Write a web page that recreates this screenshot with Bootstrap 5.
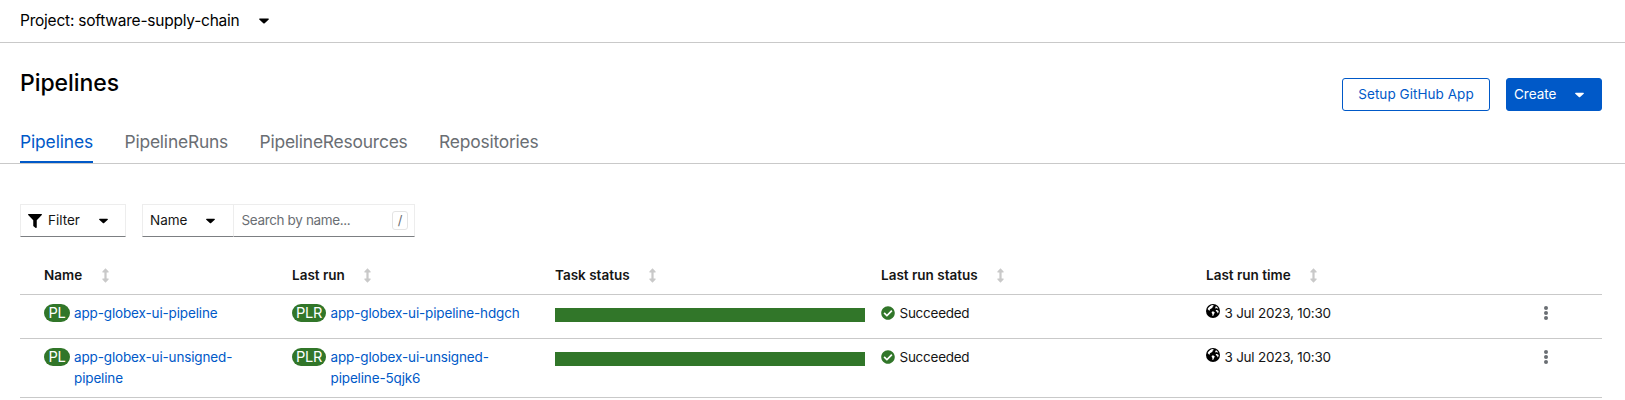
<!DOCTYPE html>
<html lang="en">
<head>
<meta charset="utf-8">
<title>Pipelines</title>
<link href="https://cdn.jsdelivr.net/npm/bootstrap@5.3.0/dist/css/bootstrap.min.css" rel="stylesheet">
<style>
:root{--blue:#0059c8;--line:#c9c9c9;--green:#317629}
body{font-family:Inter,"Liberation Sans",sans-serif;font-size:13.5px;line-height:21px;color:#151515;background:#fff;overflow:hidden}
svg{display:block;flex:none}
a{color:var(--blue);text-decoration:none}
.project-bar{height:43px;padding:0 20px 1px;border-bottom:1px solid var(--line);color:#000}
.project-bar button{font-size:15.5px;letter-spacing:-.23px;gap:19px}
.page-head{height:80px;padding:22px 23px 0 20px}
.page-head h1{font-size:23px;font-weight:500;line-height:36px;color:#000;letter-spacing:-.05px}
.actions{gap:16px;padding-top:13px}
.actions .btn{height:33px;border-radius:3px;font-size:13.5px;padding:0 7px;line-height:31px;--bs-btn-color:var(--blue);--bs-btn-border-color:var(--blue)}
.actions .btn-primary{--bs-btn-bg:var(--blue);--bs-btn-color:#fff;width:96px;gap:19px;padding-left:7px}
.actions .btn-outline-primary{width:148px;letter-spacing:.05px}
.tabs{height:41px;padding-left:20px;gap:31.5px;border-bottom:1px solid var(--line)}
.tabs .nav-link{padding:6px 0 0;font-size:17.4px;line-height:26px;letter-spacing:-.2px;color:#6a6e73;height:40px}
.tabs .nav-link.active{color:var(--blue);border-bottom:2px solid var(--blue);letter-spacing:-.12px}
.tools{padding:40px 20px 0;gap:16px}
.control{height:33px;border:1px solid #ededed;border-bottom-color:#7c7f82;background:#fff;padding:0 7px;color:#151515}
.control .caret-icon{margin-left:19px}
.filter-btn{width:106px}
.filter-btn .funnel{margin-right:6px}
.name-btn{width:91px;border-right:0}
.search-box{width:182px;color:#6a6e73;letter-spacing:-.36px;padding:0 6px 0 7.5px}
.key{width:16px;height:19px;border:1px solid #e4e4e4;border-radius:3px;line-height:17px;letter-spacing:0;font-size:13px}
.pipes{margin:17px 0 0 20px;width:1582px;table-layout:fixed;border-collapse:separate;border-spacing:0}
.pipes th{height:41px;font-weight:600;padding:2px 0 0;vertical-align:middle}
.pipes th,.pipes td{border-bottom:1px solid var(--line)}
.pipes td{padding:8px 0 14px;vertical-align:top;letter-spacing:-.14px}
.pipes tr:last-child td{padding-bottom:8px}
.pipes th:first-child,.pipes td:first-child{padding-left:24px}
.sort{gap:19.5px}
.pill{background:var(--green);color:#fff;border-radius:10px;height:18px;line-height:18px;font-size:14.6px;letter-spacing:-.3px;text-align:center;margin-top:1px;flex:none}
.pl{width:26px;margin-right:4px}
.plr{width:34px;margin-right:4.5px}
.bar{height:14px;width:310px;margin-top:5px;background:var(--green)}
.ok{letter-spacing:-.26px;gap:4.5px}
.ok svg{margin-bottom:1px}
.date{letter-spacing:-.24px;gap:4.5px}
.date svg{margin-bottom:5px}
.kebab{margin-top:3px}
</style>
</head>
<body>
<svg class="d-none">
<symbol id="caret" viewBox="0 0 10 6"><path d="M.8.4h8.4c.7 0 .9.7.5 1.1L5.7 5.3c-.4.4-1 .4-1.4 0L.3 1.5C-.1 1.1.1.4.8.4z"/></symbol>
<symbol id="sort" viewBox="0 0 7 15"><path d="M3.5.3 6.6 3.6Q7 4.4 6.2 4.6H4.6v5.8h1.6Q7 10.6 6.6 11.4L3.5 14.7.4 11.4Q0 10.6.8 10.4h1.6V4.6H.8Q0 4.4.4 3.6z"/></symbol>
<symbol id="filter" viewBox="0 0 512 512"><path d="M487.976 0H24.028C2.71 0-8.047 25.866 7.058 40.971L192 225.941V432c0 7.831 3.821 15.17 10.237 19.662l80 55.98C298.02 518.69 320 507.493 320 487.98V225.941l184.947-184.97C520.021 25.896 509.338 0 487.976 0z"/></symbol>
<symbol id="check" viewBox="0 0 512 512"><path d="M504 256c0 136.967-111.033 248-248 248S8 392.967 8 256 119.033 8 256 8s248 111.033 248 248zM227.314 387.314l184-184c6.248-6.248 6.248-16.379 0-22.627l-22.627-22.627c-6.248-6.249-16.379-6.249-22.628 0L216 308.118l-70.059-70.059c-6.248-6.248-16.379-6.248-22.628 0l-22.627 22.627c-6.248 6.248-6.248 16.379 0 22.627l104 104c6.249 6.249 16.379 6.249 22.628.001z"/></symbol>
<symbol id="globe" viewBox="0 0 14 14"><circle cx="7" cy="7" r="7"/><path fill="#fff" d="M4.2 1.9 6 1.1 7.6 1.3 7.4 2.2 6.5 2.7 6.6 3.6 5.4 4.5 4.3 4.9 3.6 6 4.3 6.7 2.7 6.2 1.6 4.9 2.6 3.4zM6 7.5 7.6 7.4 8.8 8.5 8 10 7.1 12 6.5 12 6.4 9.9 5.6 8.7zM9.7 2.1 11.2 3 12.2 4.5 11.2 4.5 10.3 4 9.4 4.4 9 3.7 9.8 3zM9.8 6.1 11 6 12.7 7 12.4 8.5 11.6 9.5 11.1 7.8 9.9 7.3z"/></symbol>
<symbol id="dots" viewBox="0 0 4 14"><circle cx="2" cy="2" r="2"/><circle cx="2" cy="7" r="2"/><circle cx="2" cy="12" r="2"/></symbol>
</svg>

<div class="project-bar d-flex align-items-center">
  <button class="border-0 bg-transparent p-0 d-flex align-items-center text-reset">Project: software-supply-chain <svg width="10" height="6"><use href="#caret"/></svg></button>
</div>
<header class="page-head d-flex justify-content-between align-items-start">
  <h1 class="m-0">Pipelines</h1>
  <div class="actions d-flex">
    <button class="btn btn-outline-primary">Setup GitHub App</button>
    <button class="btn btn-primary d-flex align-items-center">Create <svg width="9" height="6" fill="currentColor"><use href="#caret"/></svg></button>
  </div>
</header>
<nav class="tabs nav">
  <a class="nav-link active" href="#">Pipelines</a>
  <a class="nav-link" href="#">PipelineRuns</a>
  <a class="nav-link" href="#">PipelineResources</a>
  <a class="nav-link" href="#">Repositories</a>
</nav>
<div class="tools d-flex">
  <button class="control filter-btn d-flex align-items-center"><svg class="funnel" width="14" height="14"><use href="#filter"/></svg>Filter<svg class="caret-icon" width="9" height="6"><use href="#caret"/></svg></button>
  <div class="d-flex">
    <button class="control name-btn d-flex align-items-center">Name<svg class="caret-icon" width="9" height="6"><use href="#caret"/></svg></button>
    <div class="control search-box d-flex align-items-center justify-content-between"><span>Search by name...</span><span class="key text-center">/</span></div>
  </div>
</div>
<table class="pipes">
  <colgroup><col style="width:272px"><col style="width:263px"><col style="width:326px"><col style="width:325px"><col style="width:338px"><col></colgroup>
  <thead><tr>
    <th><div class="sort d-flex align-items-center">Name<svg width="7" height="15" fill="#c9c9c9"><use href="#sort"/></svg></div></th>
    <th><div class="sort d-flex align-items-center">Last run<svg width="7" height="15" fill="#c9c9c9"><use href="#sort"/></svg></div></th>
    <th><div class="sort d-flex align-items-center">Task status<svg width="7" height="15" fill="#c9c9c9"><use href="#sort"/></svg></div></th>
    <th><div class="sort d-flex align-items-center">Last run status<svg width="7" height="15" fill="#c9c9c9"><use href="#sort"/></svg></div></th>
    <th><div class="sort d-flex align-items-center">Last run time<svg width="7" height="15" fill="#c9c9c9"><use href="#sort"/></svg></div></th>
    <th></th>
  </tr></thead>
  <tbody>
  <tr>
    <td><div class="d-flex"><span class="pill pl">PL</span><a href="#">app-globex-ui-pipeline</a></div></td>
    <td><div class="d-flex"><span class="pill plr">PLR</span><a href="#">app-globex-ui-pipeline-hdgch</a></div></td>
    <td><div class="bar"></div></td>
    <td><div class="ok d-flex align-items-center"><svg width="14" height="14" fill="#317629"><use href="#check"/></svg>Succeeded</div></td>
    <td><div class="date d-flex align-items-center"><svg width="14" height="14"><use href="#globe"/></svg>3 Jul 2023, 10:30</div></td>
    <td><svg class="kebab" width="4" height="14" fill="#6a6e73"><use href="#dots"/></svg></td>
  </tr>
  <tr>
    <td><div class="d-flex"><span class="pill pl">PL</span><a href="#">app-globex-ui-unsigned-<br>pipeline</a></div></td>
    <td><div class="d-flex"><span class="pill plr">PLR</span><a href="#">app-globex-ui-unsigned-<br>pipeline-5qjk6</a></div></td>
    <td><div class="bar"></div></td>
    <td><div class="ok d-flex align-items-center"><svg width="14" height="14" fill="#317629"><use href="#check"/></svg>Succeeded</div></td>
    <td><div class="date d-flex align-items-center"><svg width="14" height="14"><use href="#globe"/></svg>3 Jul 2023, 10:30</div></td>
    <td><svg class="kebab" width="4" height="14" fill="#6a6e73"><use href="#dots"/></svg></td>
  </tr>
  </tbody>
</table>
<script src="https://cdn.jsdelivr.net/npm/bootstrap@5.3.0/dist/js/bootstrap.bundle.min.js"></script>
</body>
</html>
